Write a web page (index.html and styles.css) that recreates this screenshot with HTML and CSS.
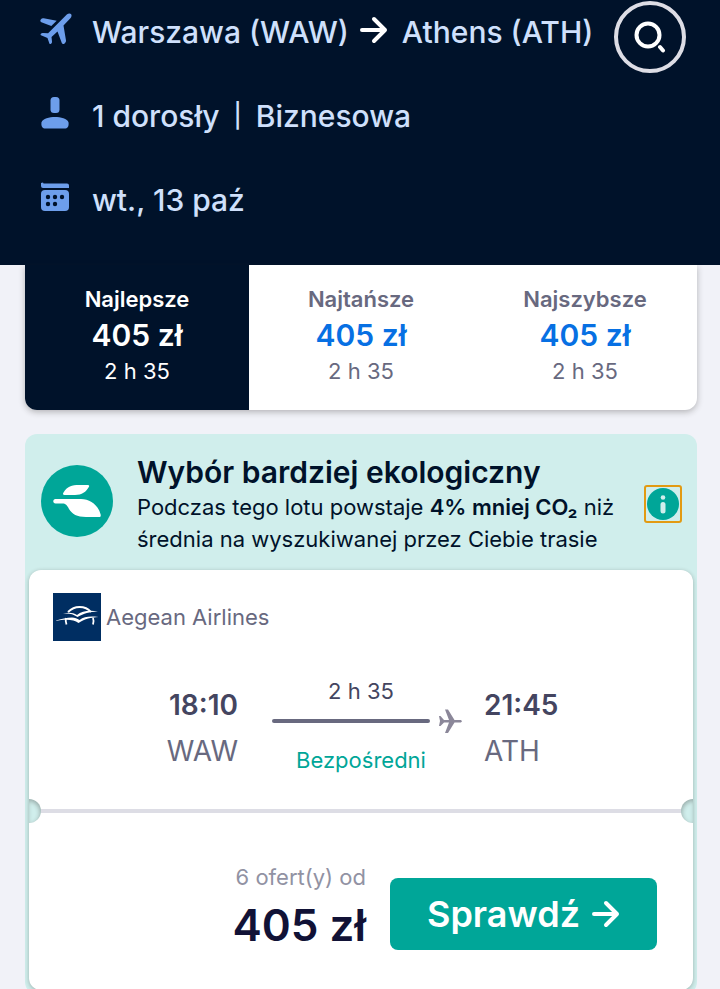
FILE: index.html
```html
<!DOCTYPE html>
<html lang="pl">
<head>
    <meta charset="UTF-8">
    <meta name="viewport" content="width=device-width, initial-scale=1.0">
    <title>Warszawa (WAW) - Athens (ATH)</title>
    <link rel="stylesheet" href="styles.css">
</head>
<body>
    <header class="header">
        <ul class="search-info">
            <li>
                <svg class="info-icon" viewBox="0 0 32 32" aria-hidden="true">
                    <path d="M31 1c1 1 .6 3-.6 4.200L23.500 12.500 26 27.500c.2 1.300-.5 2-1.400 2.900-.9.900-2.300.9-2.800-.3L17.500 18.500l-6 5.500.5 4.500c.1 1-.2 1.600-.9 2.200-.7.600-1.500.4-1.800-.5L7.500 25 1.600 22.600C.5 22.200.3 21.400.9 20.700c.6-.7 1.300-.9 2.200-.8l5 .3L26.800 1.600C28 .4 30 0 31 1z"/>
                    <path d="M.8 6.400c.8-1 1.600-1.400 2.900-1.200l13 2.600-5.400 5.200L1.400 9.200C.2 8.600 0 7.400.8 6.400z"/>
                </svg>
                <span>Warszawa (WAW)</span>
                <svg class="arrow" viewBox="0 0 28 28" aria-hidden="true"><path d="M2 14h23M14 3l11 11-11 11"/></svg>
                <span>Athens (ATH)</span>
            </li>
            <li>
                <svg class="info-icon" viewBox="0 0 32 32" aria-hidden="true">
                    <rect x="10.500" y="0" width="9" height="16" rx="3.500"/>
                    <path d="M1.500 25.500C2.500 21.500 9.500 20 15 20s12.500 1.500 13.500 5.500c.5 4-1 6-4 6h-19c-3 0-4.500-2-4-6z"/>
                </svg>
                <span>1 dorosły</span>
                <span class="separator">|</span>
                <span>Biznesowa</span>
            </li>
            <li>
                <svg class="info-icon" viewBox="0 0 32 32" aria-hidden="true">
                    <path d="M1 2l2-.5.5 1H27a2 2 0 0 1 2 2V7H3a2 2 0 0 1-2-2z"/>
                    <rect x="1" y="9" width="28" height="21" rx="4"/>
                    <g fill="#00122a">
                        <circle cx="8" cy="16" r="2.200"/><circle cx="15" cy="16" r="2.200"/><circle cx="22" cy="16" r="2.200"/>
                        <circle cx="8" cy="23" r="2.200"/><circle cx="15" cy="23" r="2.200"/>
                    </g>
                </svg>
                <span>wt., 13 paź</span>
            </li>
        </ul>
        <button class="search-btn" type="button" aria-label="Szukaj">
            <svg viewBox="0 0 32 32" aria-hidden="true"><circle cx="14" cy="14" r="11.500"/><path d="M26 26l3 3.500"/></svg>
        </button>
    </header>

    <main class="main">
        <div class="tabs">
            <button class="tab active" type="button">
                <span class="tab-name">Najlepsze</span>
                <span class="tab-price">405 zł</span>
                <span class="tab-time">2 h 35</span>
            </button>
            <button class="tab" type="button">
                <span class="tab-name">Najtańsze</span>
                <span class="tab-price">405 zł</span>
                <span class="tab-time">2 h 35</span>
            </button>
            <button class="tab" type="button">
                <span class="tab-name">Najszybsze</span>
                <span class="tab-price">405 zł</span>
                <span class="tab-time">2 h 35</span>
            </button>
        </div>

        <section class="eco">
            <div class="eco-top">
                <svg class="leaf" viewBox="0 0 72 72" aria-hidden="true">
                    <circle cx="36" cy="36" r="36" fill="#00a698"/>
                    <path d="M22.500 27.500C26 21.500 31 20 38 20h9c1 0 1.500.8 1 1.800C45 27 41 30 34 30H23.500c-1.500 0-2-1-1-2.500z"/>
                    <path d="M14.500 34H40c9 0 17 6 19.500 15 .6 2 .2 3-1.500 3H45c-9 0-14-3-17-8-2-4-3.500-5.500-6.500-5.500h-7c-3 0-3-4.500 0-4.500z"/>
                </svg>
                <div class="eco-text">
                    <h2>Wybór bardziej ekologiczny</h2>
                    <p>Podczas tego lotu powstaje <strong>4% mniej CO₂</strong> niż<br>średnia na wyszukiwanej przez Ciebie trasie</p>
                </div>
                <button class="info-btn" type="button" aria-label="Informacje">
                    <svg viewBox="0 0 32 32" aria-hidden="true"><circle cx="16" cy="16" r="16" fill="#00a698"/><circle cx="16" cy="9.500" r="2.300"/><rect x="13.500" y="14" width="5" height="11.500" rx="2.500"/></svg>
                </button>
            </div>

            <article class="ticket">
                <div class="airline">
                    <svg class="airline-logo" viewBox="0 0 48 48" aria-hidden="true">
                        <rect width="48" height="48" fill="#002e62"/>
                        <path fill="none" stroke="#fff" stroke-width="1.800" d="M13.500 31.500c-1-2.500-1-4.500-.5-6.500M15 19c3-3 7-5 11.500-5 5 0 9 2 11.500 5M40 25c.8 2 .8 4 0 6.500"/>
                        <path fill="#fff" d="M10 20.500c6-1.500 10-1 14 1.500 5-4 12-5 21-3.500-9 .3-14 2-20.500 5.500-4.500-3-8-4-14.500-3.500z"/>
                        <path fill="#fff" d="M2 28c6-2 12-3.500 17-3.500 3 .2 5 1 7.500 2.500 5-3.500 10-4 19-3-8 .8-13 1.500-20 6-5-3.500-12-4-23.500-2z"/>
                    </svg>
                    <span>Aegean Airlines</span>
                </div>

                <div class="flight">
                    <div class="place from">
                        <strong>18:10</strong>
                        <span>WAW</span>
                    </div>
                    <div class="leg">
                        <span class="leg-time">2 h 35</span>
                        <div class="leg-line">
                            <span></span>
                            <svg viewBox="0 0 24 24" aria-hidden="true"><path d="M1 7h1.500l3.500 4h5L7 .500h3L16.500 11H22c2.500 0 2.500 2.500 0 2.500h-5.500L10 24H7l4-10.500H6L2.500 17H1l1-5z"/></svg>
                        </div>
                        <span class="leg-type">Bezpośredni</span>
                    </div>
                    <div class="place">
                        <strong>21:45</strong>
                        <span>ATH</span>
                    </div>
                </div>

                <div class="divider"></div>

                <div class="offer">
                    <div class="offer-price">
                        <span>6 ofert(y) od</span>
                        <strong>405 zł</strong>
                    </div>
                    <button class="btn" type="button">
                        Sprawdź
                        <svg class="arrow" viewBox="0 0 28 28" aria-hidden="true"><path d="M2 14h23M14 3l11 11-11 11"/></svg>
                    </button>
                </div>
            </article>
        </section>
    </main>
</body>
</html>
```
FILE: styles.css
```css
*{
    box-sizing: border-box;
    margin: 0px;
    padding: 0px;
}
body{
    background: #f1f2f8;
    color: #00122a;
    font-family: Inter, "Liberation Sans", sans-serif;
    font-size: 22px;
    line-height: 32px;
}
button{
    border: none;
    background: none;
    font: inherit;
    color: inherit;
    cursor: pointer;
}
svg{
    display: block;
    flex-shrink: 0;
}

/* header */
.header{
    display: flex;
    justify-content: space-between;
    align-items: flex-start;
    padding: 0 34px 45px 40px;
    background: #00122a;
}
.search-info{
    display: flex;
    flex-direction: column;
    gap: 44px;
    padding-top: 12px;
    list-style: none;
    color: #cfe0fc;
    font-size: 30px;
    font-weight: 500;
    line-height: 40px;
}
.search-info li{
    display: flex;
    align-items: center;
    white-space: nowrap;
}
.info-icon{
    width: 32px;
    height: 32px;
    margin: 0 20px 6px 0;
    fill: #6d9eeb;
}
.separator{
    margin: 0 14px;
    font-size: 24px;
}
.arrow{
    width: 28px;
    height: 28px;
    fill: none;
    stroke: #fff;
    stroke-width: 4;
    stroke-linecap: round;
    stroke-linejoin: round;
}
.search-info .arrow{
    margin: 0 14px 4px 11px;
}
.search-btn{
    display: flex;
    justify-content: center;
    align-items: center;
    width: 72px;
    height: 72px;
    margin-top: 1px;
    border: 4px solid #dddde5;
    border-radius: 50%;
}
.search-btn svg{
    width: 32px;
    height: 32px;
    fill: none;
    stroke: #fff;
    stroke-width: 4;
    stroke-linecap: round;
}

/* sort tabs */
.main{
    padding: 0 23px 24px 25px;
}
.tabs{
    display: grid;
    grid-template-columns: repeat(3, 1fr);
    margin-bottom: 24px;
    border-radius: 0 0 12px 12px;
    background: #fff;
    box-shadow: 0 2px 6px rgba(37, 32, 31, .3);
    overflow: hidden;
}
.tab{
    display: flex;
    flex-direction: column;
    align-items: center;
    padding: 18px 8px 23px;
    color: #68697f;
}
.tab-name{
    font-weight: 600;
}
.tab-price{
    color: #0770e3;
    font-size: 30px;
    font-weight: 600;
    line-height: 40px;
}
.tab.active{
    background: #00122a;
    color: #fff;
}
.tab.active .tab-price{
    color: #fff;
}

/* eco card */
.eco{
    padding: 0 4px 4px;
    border-radius: 12px;
    background: #d0eeec;
}
.eco-top{
    display: flex;
    align-items: center;
    padding: 19px 11px 15px 12px;
}
.leaf{
    width: 72px;
    height: 72px;
    margin: 0 24px 6px 0;
    fill: #fff;
}
.eco-text{
    flex: 1;
}
.eco-text h2{
    font-size: 30px;
    font-weight: 600;
    line-height: 38px;
}
.eco-text strong{
    font-weight: 600;
}
.info-btn{
    margin-left: 12px;
    padding: 1px;
    border: 2px solid #e29a12;
    border-radius: 3px;
}
.info-btn svg{
    width: 32px;
    height: 32px;
    fill: #d0eeec;
}

/* ticket */
.ticket{
    border-radius: 12px;
    background: #fff;
    box-shadow: 0 1px 4px rgba(37, 32, 31, .3);
}
.airline{
    display: flex;
    align-items: center;
    gap: 5px;
    padding: 23px 24px 0;
    color: #68697f;
}
.airline-logo{
    width: 48px;
    height: 48px;
}
.flight{
    display: grid;
    grid-template-columns: 1fr 178px 1fr;
    align-items: center;
    gap: 34px;
    padding: 34px 24px 33px;
}
.place{
    display: flex;
    flex-direction: column;
    gap: 6px;
    padding-top: 4px;
    color: #68697f;
    font-size: 28px;
    line-height: 40px;
}
.place strong{
    color: #444560;
    font-weight: 600;
}
.from{
    align-items: flex-end;
}
.leg{
    display: flex;
    flex-direction: column;
    align-items: center;
}
.leg-time{
    color: #444560;
}
.leg-line{
    display: flex;
    align-items: center;
    align-self: stretch;
    gap: 8px;
    margin: 2px -12px 11px 0;
}
.leg-line span{
    flex: 1;
    height: 4px;
    border-radius: 2px;
    background: #68697f;
}
.leg-line svg{
    width: 24px;
    height: 24px;
    fill: #8b8799;
}
.leg-type{
    color: #00a698;
}
.divider{
    display: flex;
    justify-content: space-between;
    align-items: center;
    height: 4px;
    background: #dddde5;
}
.divider::before,
.divider::after{
    content: "";
    width: 12px;
    height: 24px;
    background: #d0eeec;
}
.divider::before{
    border-radius: 0 12px 12px 0;
    box-shadow: inset -1px 2px 4px rgba(37, 32, 31, .3);
}
.divider::after{
    border-radius: 12px 0 0 12px;
    box-shadow: inset 1px 2px 4px rgba(37, 32, 31, .3);
}
.offer{
    display: flex;
    justify-content: flex-end;
    align-items: flex-end;
    gap: 24px;
    padding: 48px 36px 33px;
}
.offer-price{
    display: flex;
    flex-direction: column;
    align-items: flex-end;
    color: #9192a3;
}
.offer-price strong{
    color: #111236;
    font-size: 44px;
    font-weight: 600;
    line-height: 64px;
}
.btn{
    display: flex;
    justify-content: center;
    align-items: center;
    gap: 12px;
    width: 267px;
    height: 72px;
    margin-bottom: 7px;
    border-radius: 8px;
    background: #00a698;
    color: #fff;
    font-size: 36px;
    font-weight: 600;
}
```
